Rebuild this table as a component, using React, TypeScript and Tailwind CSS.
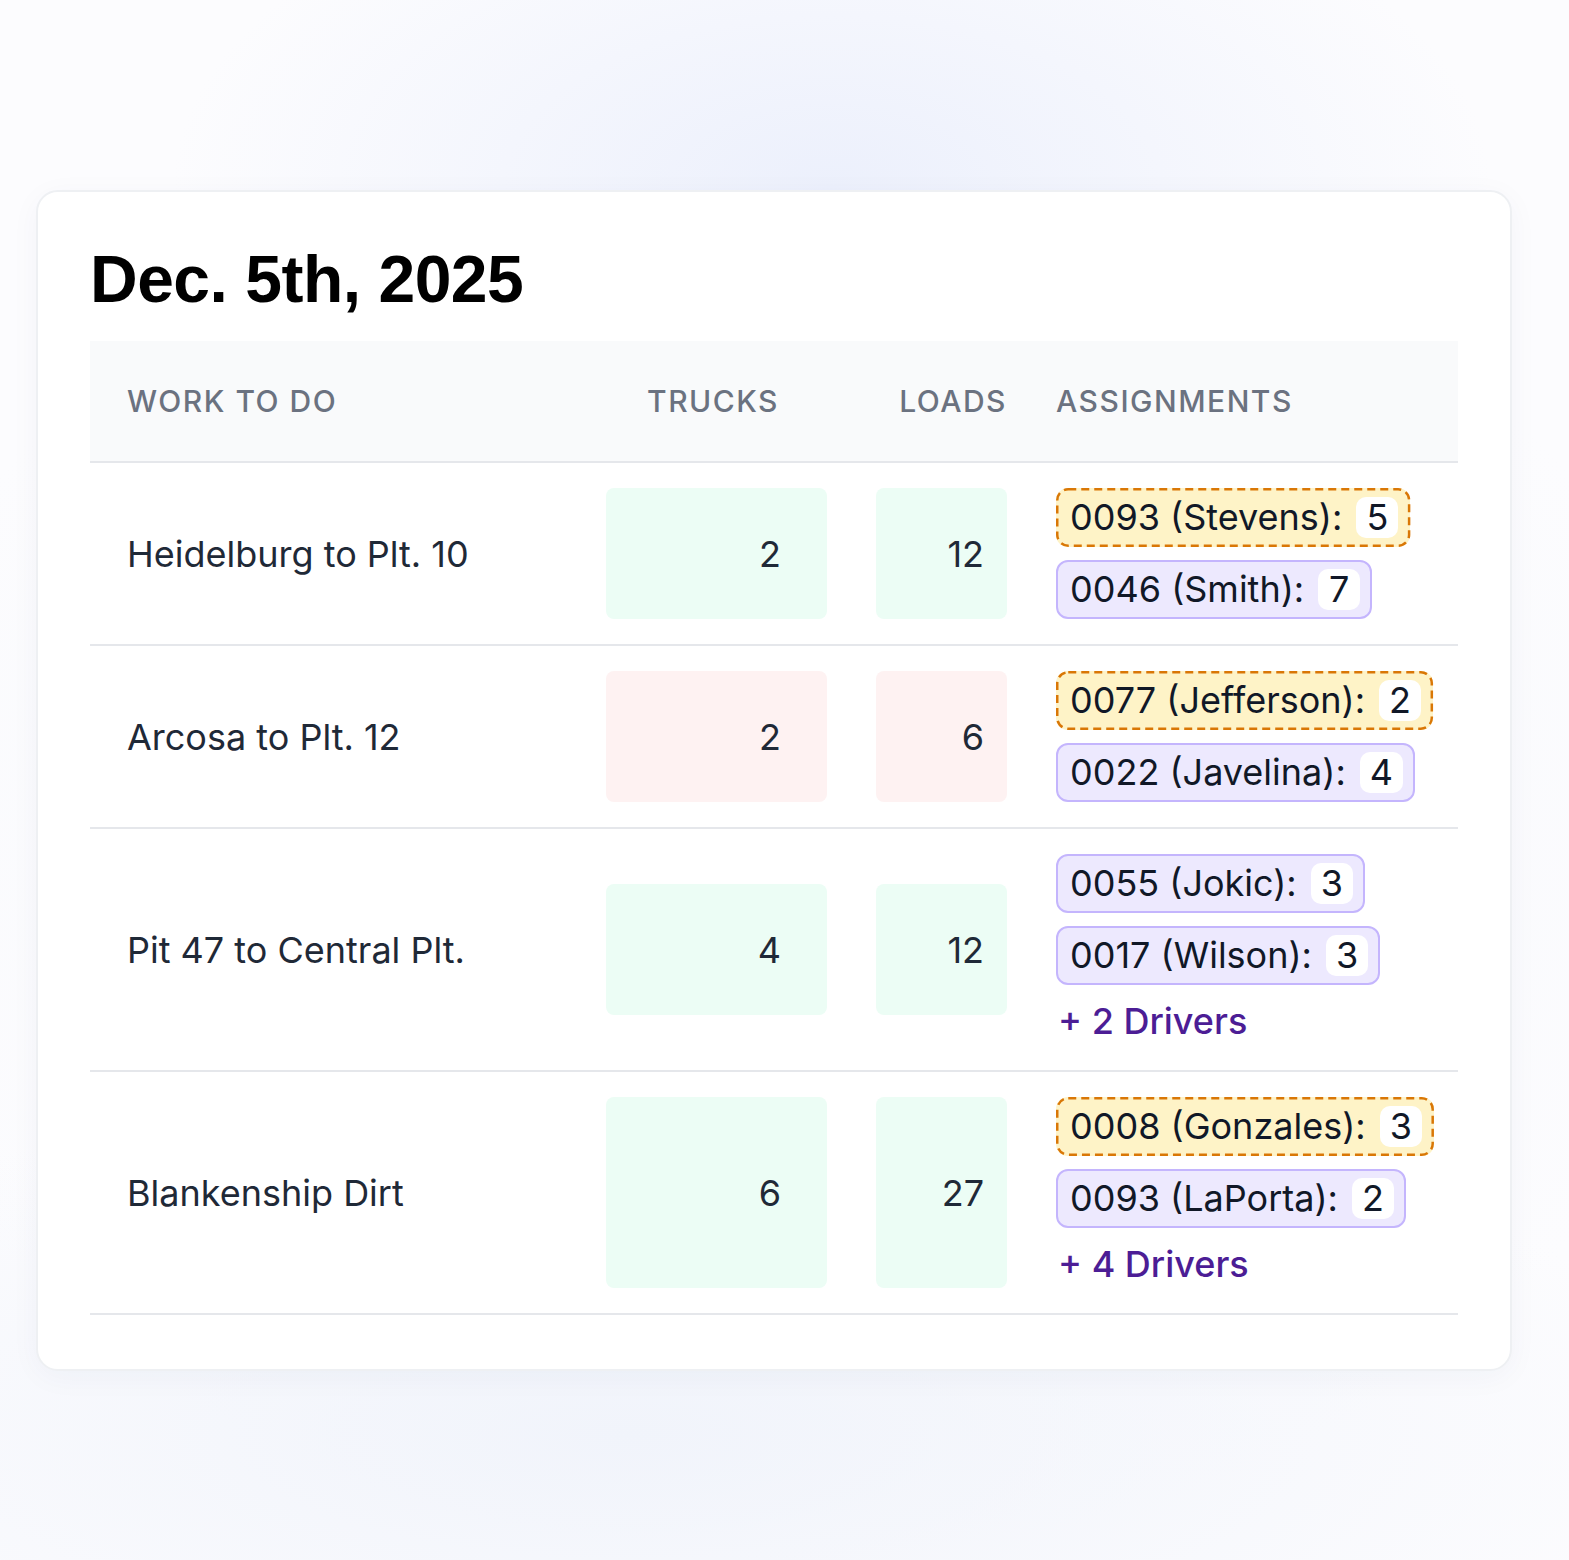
import React from "react";

type Assign = { label: string; n: number; dashed?: boolean };
type Row = {
  name: string;
  trucks: number;
  loads: number;
  tone: "green" | "red";
  assigns: Assign[];
  more?: string;
  boxClass?: string;
};

const rows: Row[] = [
  {
    name: "Heidelburg to Plt. 10",
    trucks: 2,
    loads: 12,
    tone: "green",
    assigns: [
      { label: "0093 (Stevens):", n: 5, dashed: true },
      { label: "0046 (Smith):", n: 7 },
    ],
  },
  {
    name: "Arcosa to Plt. 12",
    trucks: 2,
    loads: 6,
    tone: "red",
    assigns: [
      { label: "0077 (Jefferson):", n: 2, dashed: true },
      { label: "0022 (Javelina):", n: 4 },
    ],
  },
  {
    name: "Pit 47 to Central Plt.",
    trucks: 4,
    loads: 12,
    tone: "green",
    assigns: [
      { label: "0055 (Jokic):", n: 3 },
      { label: "0017 (Wilson):", n: 3 },
    ],
    more: "+ 2 Drivers",
    boxClass: "self-center h-[131px]",
  },
  {
    name: "Blankenship Dirt",
    trucks: 6,
    loads: 27,
    tone: "green",
    assigns: [
      { label: "0008 (Gonzales):", n: 3, dashed: true },
      { label: "0093 (LaPorta):", n: 2 },
    ],
    more: "+ 4 Drivers",
  },
];

function Pill({ a }: { a: Assign }) {
  return (
    <div
      className={
        "relative inline-flex items-center gap-[14px] self-start rounded-[12px] border-2 pl-[12px] pr-[10px] py-[7px] " +
        (a.dashed
          ? "border-transparent bg-[#fef3c7]"
          : "border-solid border-[#c4b5fd] bg-[#ede9fe]")
      }
    >
      {a.dashed && (
        <svg
          className="pointer-events-none absolute left-[-2px] top-[-2px] h-[calc(100%+4px)] w-[calc(100%+4px)] overflow-visible"
          aria-hidden="true"
        >
          <rect
            x="1.25"
            y="1.25"
            rx="11"
            ry="11"
            fill="none"
            stroke="#d97706"
            strokeWidth="2.5"
            strokeDasharray="8 5"
            style={{ width: "calc(100% - 2.5px)", height: "calc(100% - 2.5px)" }}
          />
        </svg>
      )}
      <span className="relative text-[36px] leading-[41px] font-normal text-[#111827] whitespace-nowrap">
        {a.label}
      </span>
      <span className="relative h-[41px] min-w-[42px] rounded-[10px] bg-white px-[10px] text-center text-[36px] leading-[41px] font-normal text-[#111827]">
        {a.n}
      </span>
    </div>
  );
}

export default function App() {
  return (
    <div className="min-h-[1560px] w-full bg-[#fcfcfe] bg-[radial-gradient(ellipse_42%_22%_at_53%_12%,#ecf0fc_0%,rgba(255,255,255,0)_100%),radial-gradient(ellipse_70%_22%_at_40%_92%,#f1f4fb_0%,rgba(255,255,255,0)_100%),radial-gradient(ellipse_60%_45%_at_50%_55%,#f5f7fc_0%,rgba(255,255,255,0)_100%)] pt-[190px] font-['Inter',sans-serif]">
      <div className="ml-[36px] w-[1476px] rounded-[22px] border-2 border-[#eef0f3] bg-white px-[52px] pt-[54px] pb-[54px] shadow-[0_6px_30px_rgba(30,40,90,0.04)]">
        <h1 className="font-['Liberation_Sans',Arial,sans-serif] text-[66px] leading-[66px] font-bold tracking-[-0.5px] text-black">
          Dec. 5th, 2025
        </h1>

        <div className="mt-[29px]">
          <div className="grid h-[122px] grid-cols-[467px_221px_131px_1fr] items-center gap-x-[49px] border-b-2 border-[#e5e7eb] bg-[#f9fafb] text-[30px] font-medium tracking-[0.05em] text-[#6b7280]">
            <div className="pl-[37px]">WORK TO DO</div>
            <div className="pr-[48px] text-right">TRUCKS</div>
            <div className="pr-[0px] text-right">LOADS</div>
            <div>ASSIGNMENTS</div>
          </div>

          {rows.map((r) => {
            const box =
              r.tone === "green" ? "bg-[#ecfdf5]" : "bg-[#fef2f2]";
            return (
              <div
                key={r.name}
                className="grid grid-cols-[467px_221px_131px_1fr] gap-x-[49px] border-b-2 border-[#e5e7eb] py-[25px]"
              >
                <div className="flex items-center pl-[37px] text-[36px] text-[#1f2937]">
                  {r.name}
                </div>
                <div
                  className={
                    "flex items-center justify-end rounded-[8px] pr-[46px] text-[36px] text-[#1f2937] " +
                    box +
                    " " +
                    (r.boxClass ?? "")
                  }
                >
                  {r.trucks}
                </div>
                <div
                  className={
                    "flex items-center justify-end rounded-[8px] pr-[23px] text-[36px] text-[#1f2937] " +
                    box +
                    " " +
                    (r.boxClass ?? "")
                  }
                >
                  {r.loads}
                </div>
                <div className="flex flex-col gap-[13px]">
                  {r.assigns.map((a) => (
                    <Pill key={a.label} a={a} />
                  ))}
                  {r.more && (
                    <div className="pl-[2px] text-[36px] leading-[47px] font-medium text-[#4c1d95]">
                      {r.more}
                    </div>
                  )}
                </div>
              </div>
            );
          })}
        </div>
      </div>
    </div>
  );
}
